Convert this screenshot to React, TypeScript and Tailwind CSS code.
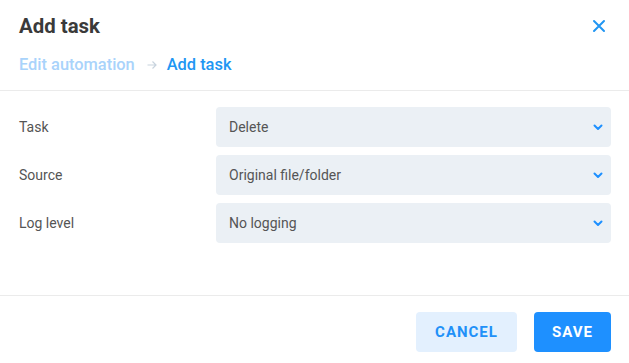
import React from "react";

const Chevron = () => (
  <svg width="10" height="7" viewBox="0 0 10 7" fill="none">
    <path d="M1.5 1.5 L5 5 L8.5 1.5" stroke="#1e90ff" strokeWidth="2" strokeLinecap="round" strokeLinejoin="round" />
  </svg>
);

const Row = ({ label, value }: { label: string; value: string }) => (
  <div className="flex items-center">
    <div className="w-[197px] text-[14px] text-[#555]">{label}</div>
    <div className="flex-1 h-[40px] rounded-[4px] bg-[#ebf0f5] flex items-center justify-between pl-[13px] pr-[8px]">
      <span className="text-[14px] text-[#555]">{value}</span>
      <Chevron />
    </div>
  </div>
);

export default function App() {
  return (
    <div className="w-[629px] h-[363px] bg-white flex flex-col" style={{ fontFamily: "Roboto, sans-serif" }}>
      <div className="px-[19px] pt-[12px]">
        <div className="flex items-center justify-between h-[28px]">
          <h1 className="text-[20.4px] font-bold text-[#3a3a3a]">Add task</h1>
          <svg width="14" height="14" viewBox="0 0 14 14" className="mr-[4px]">
            <path d="M2 2 L12 12 M12 2 L2 12" stroke="#2196f3" strokeWidth="2" strokeLinecap="round" />
          </svg>
        </div>
        <div className="flex items-center h-[28px] mt-[11px] text-[16.4px] font-medium">
          <span className="text-[#a9d3fb]">Edit automation</span>
          <svg width="10" height="10" viewBox="0 0 10 10" className="ml-[12px] mr-[10px]">
            <path d="M0.5 5 H9 M5.5 1.5 L9 5 L5.5 8.5" stroke="#c8d3de" strokeWidth="1.2" fill="none" />
          </svg>
          <span className="text-[#2196f3]">Add task</span>
        </div>
      </div>
      <div className="mt-[11px] border-t border-[#ebebeb]" />
      <div className="px-[19px] pr-[18px] pt-[16px] flex flex-col gap-[8px] h-[204px]">
        <Row label="Task" value="Delete" />
        <Row label="Source" value="Original file/folder" />
        <Row label="Log level" value="No logging" />
      </div>
      <div className="border-t border-[#ebebeb]" />
      <div className="flex justify-end gap-[17px] pt-[16px] pr-[18px]">
        <button className="w-[101px] h-[40px] rounded-[4px] bg-[#e3f0fe] text-[#2190f8] text-[15px] font-bold tracking-[1px]">
          CANCEL
        </button>
        <button className="w-[77px] h-[40px] rounded-[4px] bg-[#1e90ff] text-white text-[15px] font-bold tracking-[1px]">
          SAVE
        </button>
      </div>
    </div>
  );
}
